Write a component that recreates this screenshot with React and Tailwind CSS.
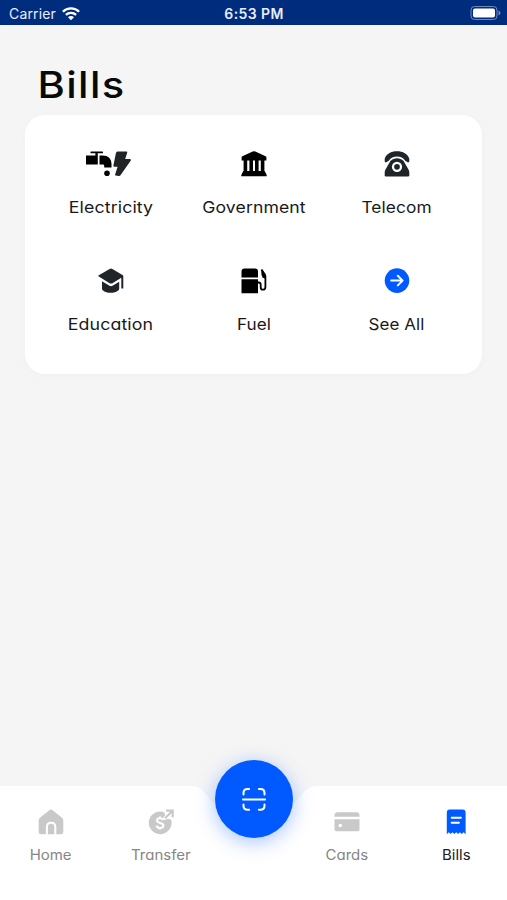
const FONT = "font-['Inter','Liberation_Sans',sans-serif] [font-feature-settings:'cv11']";

function Tap() {
  return (
    <svg width="46" height="26" viewBox="0 0 46 26" className="mr-[3px] shrink-0">
      <g fill="#000">
        <rect x="4.5" y=".5" width="12.5" height="1.8" rx=".6" />
        <rect x="9.4" y="1" width="2.3" height="4" />
        <rect x="0" y="4.5" width="11.8" height="9" />
        <path d="M13.5 4.5h3.2c5.4 0 8.8 3.4 8.8 8.5v3.5h-7.3V15c0-1.2-.6-1.6-1.7-1.6h-3z" />
        <circle cx="21" cy="22.3" r="2.8" />
      </g>
      <path d="M32 .5h8.4q1.2 0 .8 1.2L39.2 8h4.6q1.8 0 1 1.6L34.3 24.6q-.7.7-1.7.4l-3-.4q-.8-.3-.5-1.2l2.5-7.7h-3.2q-1.2 0-1-1.2L30 1.8q.4-1.3 2-1.3z" fill="#202427" />
    </svg>
  );
}

function Government() {
  return (
    <svg width="26" height="26" viewBox="0 0 26 26">
      <path d="M11.7.6q1.3-.7 2.6 0L24.6 5.3q.8.4.8 1.2v3.1H.6V6.5q0-.8.8-1.2zM2.6 9.3h3.6v11H2.6zM8.4 9.3H12v11H8.4zM14 9.3h3.6v11H14zM19.8 9.3h3.6v11h-3.6zM2.3 20h21.4l2 4v1.3H.3V24z" fill="#000" />
    </svg>
  );
}

function Telephone() {
  return (
    <svg width="26" height="26" viewBox="0 0 26 26">
      <g fill="#202529">
        <path d="M.7 10.3V7.7C2.2 2.7 7.1.2 13 .2S23.8 2.7 25.3 7.7v2.6q0 1.1-1.2 1.1l-2.9-1.6C19.4 7 16.3 5.6 13 5.6S6.6 7 4.8 9.8l-2.9 1.6Q.7 11.4.7 10.3z" />
        <path d="M6.4 9.9C10.2 6.2 15.8 6.2 19.6 9.9L24.5 18.4q.8 1.5.8 3.2v2.6q0 1.2-1.2 1.2H1.9Q.7 25.4.7 24.2v-2.6q0-1.7.8-3.2z" />
      </g>
      <circle cx="13" cy="15.8" r="4" fill="none" stroke="#fff" strokeWidth="2.3" />
    </svg>
  );
}

function Cap() {
  return (
    <svg width="26" height="26" viewBox="0 0 26 26" fill="#202529">
      <path d="M.8 7.3 11.6 1q1.4-.8 2.8 0L24.5 6.9q.8.4.8 1.3v12.3h-2V9.8l-8.9 5.4q-1.4.8-2.8 0L.8 8.6q-1-.6 0-1.3z" />
      <path d="M4 13.3l7.5 4.5q1.5.8 3 0l6.7-4.1v7q0 .9-.7 1.5c-4.1 3.5-11.7 3.5-15.8 0q-.7-.6-.7-1.5z" />
    </svg>
  );
}

function Pump() {
  return (
    <svg width="26" height="26" viewBox="0 0 26 26">
      <path d="M.5 9.4V3.4Q.5.4 3.5.4H14q3 0 3 3v6zM.5 11.2H17v14H.5z" fill="#000" />
      <path d="M16.5 14.5h1q2.2 0 2.2 2.2v2.5q0 2.5 2 2.5 2.7 0 2.7-2.8V8.7q0-1.5-.9-2.8l-3-4.5" fill="none" stroke="#000" strokeWidth="1.8" />
      <path d="m20.2 1.5 4 4.6.9 5-3.6-1.6-1-2.8z" fill="#000" />
    </svg>
  );
}

function SeeAll() {
  return (
    <svg width="26" height="26" viewBox="0 0 26 26">
      <circle cx="13" cy="12.6" r="12.3" fill="#005aff" />
      <path d="M7.2 12.6h11.2M13.8 7.8l4.8 4.8-4.8 4.8" fill="none" stroke="#fff" strokeWidth="2" strokeLinecap="round" strokeLinejoin="round" />
    </svg>
  );
}

function Home() {
  return (
    <svg width="26" height="26" viewBox="0 0 26 26">
      <path d="M11.7.9q1.3-1 2.6 0l9.8 7.9q1.2.9 1.2 2.4v11.9q0 2.2-2.2 2.2H2.9Q.7 25.3.7 23.1V11.2q0-1.5 1.2-2.4z" fill="#c9c9c9" />
      <path d="M8.9 25.8V18q0-4.3 4.2-4.3t4.2 4.3v7.8" fill="none" stroke="#fff" strokeWidth="2" />
    </svg>
  );
}

function Transfer() {
  return (
    <svg width="26" height="26" viewBox="0 0 26 26">
      <circle cx="12.2" cy="13.8" r="11.4" fill="#c9c9c9" />
      <path d="M15.5 0H26v10.5h-4l-2.2-.8-3.3 1.6-1.6-2 2.2-3z" fill="#fff" />
      <path d="m17 9.2 7-7M18 1.6h6.7v6.7" fill="none" stroke="#c9c9c9" strokeWidth="2.2" />
      <path d="M15 11.1c-.4-1.3-1.4-1.9-3-1.9-1.9 0-3 .9-3 2.4 0 3.5 6.4 1.3 6.4 4.9 0 1.6-1.3 2.5-3.4 2.5-1.8 0-3.1-.7-3.5-2.2M12 7.5v1.8m0 9.5v1.8" fill="none" stroke="#fff" strokeWidth="2" />
    </svg>
  );
}

function Card() {
  return (
    <svg width="26" height="26" viewBox="0 0 26 26">
      <path d="M.5 7.8V6.4q0-3.2 3.2-3.2h18.6q3.2 0 3.2 3.2v1.4zM.5 10.3h25v10.2q0 1.7-1.7 1.7H2.2Q.5 22.2.5 20.5z" fill="#c9c9c9" />
      <circle cx="6.3" cy="16.5" r="1.8" fill="#fff" />
    </svg>
  );
}

function Receipt() {
  return (
    <svg width="26" height="26" viewBox="0 0 26 26">
      <path d="M3.8 25.3V3.5Q3.8.5 6.8.5h12.8q3 0 3 3v21.8l-2-2-1.9 1.8-1.8-1.9-1.8 1.9-1.9-1.9-1.8 1.9-1.9-1.9-1.8 1.9-1.8-1.8z" fill="#005aff" />
      <path d="M8.7 8.7h9.2M8.7 13.8h7.2" stroke="#fff" strokeWidth="2" strokeLinecap="round" />
    </svg>
  );
}

const bills = [
  ["Electricity", Tap, "scale-x-[1.11]"],
  ["Government", Government, "scale-x-[1.1]"],
  ["Telecom", Telephone, "scale-x-[1.08]"],
  ["Education", Cap, "scale-x-[1.11]"],
  ["Fuel", Pump, "scale-x-[1.07]"],
  ["See All", SeeAll, "scale-x-[1.06]"],
];

function Tab({ label, Icon, width, active }) {
  return (
    <div className={`flex flex-col items-center pt-[23px] ${width}`}>
      <Icon />
      <span className={`mt-[10px] scale-x-[1.07] text-[14px] leading-5 ${active ? "text-[#202020]" : "text-[#858585]"}`}>{label}</span>
    </div>
  );
}

export default function App() {
  return (
    <div className={`flex h-[900px] w-[507px] flex-col overflow-hidden bg-[#f5f5f5] ${FONT}`}>
      <header className="grid h-[25px] shrink-0 grid-cols-3 items-center bg-[#002c7e] pr-[6px] pl-[9px] text-[14px] text-[#e8eefb]">
        <div className="flex items-center gap-[6px] pt-[2px] [font-feature-settings:normal]">
          <span className="tracking-[0.15px]">Carrier</span>
          <svg width="18" height="14" viewBox="0 0 18 14" fill="none" stroke="#fff" strokeWidth="2.3">
            <path d="M.9 4.8a11.5 11.5 0 0 1 16.2 0M3.9 7.9a7.2 7.2 0 0 1 10.2 0" />
            <path d="M6 10.2a4.2 4.2 0 0 1 6 0L9 13.3z" fill="#fff" stroke="none" />
          </svg>
        </div>
        <span className="pt-[2px] pr-[2px] text-center font-semibold tracking-[0.4px]">6:53 PM</span>
        <svg className="mt-[1px] justify-self-end" width="31" height="15" viewBox="0 0 31 15">
          <rect x="1" y=".5" width="26" height="13" rx="3.5" fill="none" stroke="#7189b9" />
          <rect x="3" y="2.5" width="22" height="9" rx="2" fill="#fff" />
          <path d="M28.5 4.5v5q2-.7 2-2.5t-2-2.5z" fill="#7189b9" />
        </svg>
      </header>
      <main className="flex flex-1 flex-col px-[25px] pt-[36px]">
        <h1 className="w-fit origin-left scale-x-[1.14] pl-[11px] text-[36.5px] leading-[48px] font-medium tracking-[1.2px] text-[#060b09]">Bills</h1>
        <section className="mt-[5.5px] grid h-[259px] grid-cols-3 grid-rows-[117px_117px] rounded-[20px] bg-white px-[14px] pt-[36.5px] shadow-[0_2px_10px_rgba(0,0,0,0.025)]">
          {bills.map(([label, Icon, scale]) => (
            <div key={label} className="flex flex-col items-center">
              <Icon />
              <span className={`mt-[18px] text-[16px] leading-6 tracking-[0.1px] whitespace-nowrap text-[#191919] ${scale}`}>{label}</span>
            </div>
          ))}
        </section>
      </main>
      <nav className="relative flex h-[114px] shrink-0">
        <svg className="absolute inset-0" width="507" height="114" viewBox="0 0 507 114">
          <path d="M0 0h190q9 0 14 6c8 11 20 24 50 24s42-13 50-24q5-6 14-6h189v114H0z" fill="#fff" />
        </svg>
        <div className="relative flex w-full pl-[5px]">
          <Tab label="Home" Icon={Home} width="w-[92px]" />
          <Tab label="Transfer" Icon={Transfer} width="w-[127px]" />
          <div className="w-[59px]" />
          <Tab label="Cards" Icon={Card} width="w-[127px]" />
          <Tab label="Bills" Icon={Receipt} width="w-[92px]" active />
        </div>
        <button className="absolute top-[-26.5px] left-[215px] flex h-[78px] w-[78px] items-center justify-center rounded-full bg-[#005aff] shadow-[0_4px_20px_rgba(0,90,255,0.35)]">
          <svg width="26" height="26" viewBox="0 0 26 26" fill="none" stroke="#fff" strokeWidth="2" strokeLinecap="round">
            <path d="M2 13.4h22M2.5 8.4V7q0-4 4-4h1.6M17.9 3h1.6q4 0 4 4v1.4M2.5 18.4v1.4q0 4 4 4h1.6M17.9 23.8h1.6q4 0 4-4v-1.4" />
          </svg>
        </button>
      </nav>
    </div>
  );
}
